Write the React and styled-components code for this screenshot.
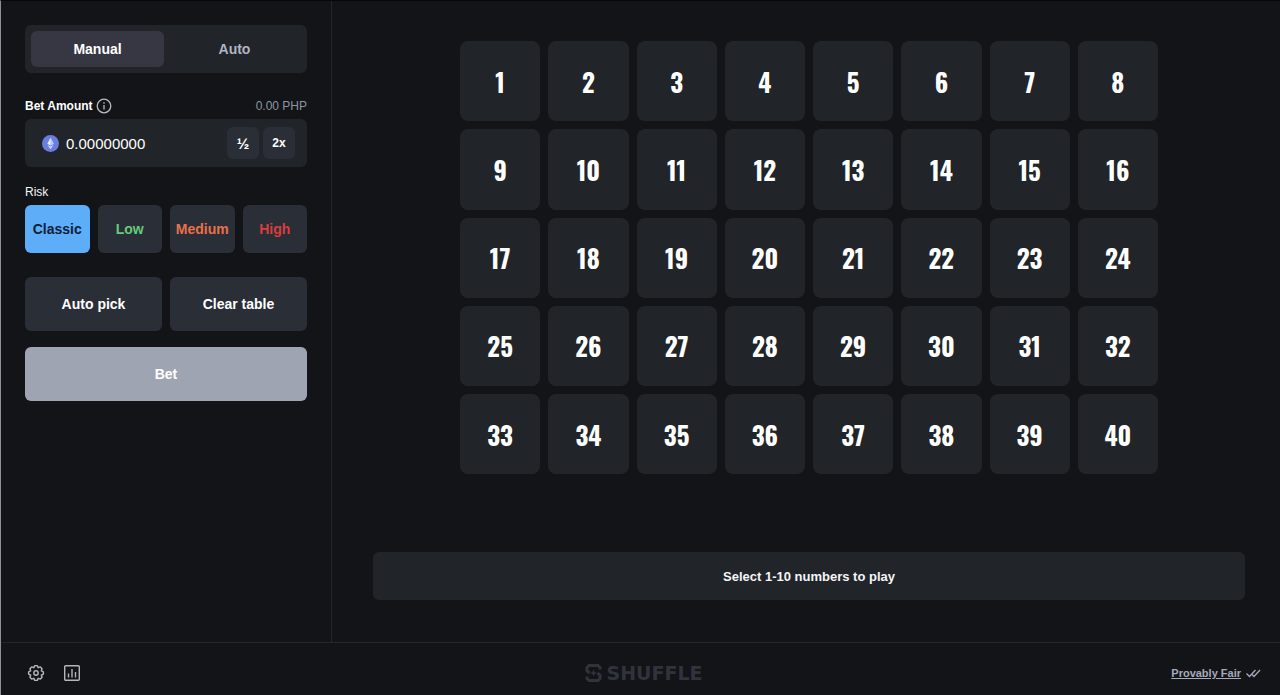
import { useState } from "react";
import styled, { createGlobalStyle } from "styled-components";

const GlobalStyle = createGlobalStyle`
  * {
    box-sizing: border-box;
  }

  body {
    margin: 0;
    background: #121418;
    color: #f5f6f8;
    font-family: "Liberation Sans", Arial, sans-serif;
    font-size: 14px;
  }

  button,
  input {
    font-family: inherit;
  }
`;

const Page = styled.div`
  display: flex;
  flex-direction: column;
  min-height: 100vh;
  border-top: 1px solid #060709;
  border-left: 1px solid #8e9092;
`;

const Game = styled.main`
  display: flex;
  flex: 1;
`;

const Sidebar = styled.form`
  flex: 0 0 331px;
  min-width: 0;
  padding: 24px;
  border-right: 1px solid #24262b;
`;

const Tabs = styled.div`
  display: flex;
  gap: 4px;
  height: 48px;
  padding: 6px;
  margin-bottom: 24px;
  border-radius: 6px;
  background: #212428;
`;

const Tab = styled.button`
  flex: 1;
  border: 0;
  border-radius: 6px;
  background: ${(props) => (props.$active ? "#363743" : "transparent")};
  color: ${(props) => (props.$active ? "#ffffff" : "#b0b5c4")};
  font-size: 14px;
  font-weight: 600;
  cursor: pointer;
`;

const LabelRow = styled.div`
  display: flex;
  align-items: center;
  justify-content: space-between;
  height: 18px;
  margin-bottom: 4px;
  font-size: 12px;
  color: #8f94a3;
`;

const Label = styled.label`
  display: flex;
  align-items: center;
  gap: 2px;
  color: #ffffff;
  font-weight: 600;
`;

const AmountField = styled.div`
  display: flex;
  align-items: center;
  gap: 4px;
  height: 48px;
  padding: 0 12px 0 17px;
  border-radius: 6px;
  background: #212428;
`;

const AmountInput = styled.input`
  flex: 1;
  width: 100%;
  min-width: 0;
  padding: 0 0 0 3px;
  border: 0;
  outline: 0;
  background: transparent;
  color: #ffffff;
  font-size: 15px;
`;

const SmallButton = styled.button`
  display: flex;
  flex: none;
  align-items: center;
  justify-content: center;
  width: 32px;
  height: 32px;
  padding: 0;
  border: 0;
  border-radius: 6px;
  background: #2a2e36;
  color: #ffffff;
  font-size: ${(props) => (props.$large ? "15px" : "12px")};
  font-weight: 600;
  cursor: pointer;
`;

const RiskGroup = styled.fieldset`
  min-width: 0;
  margin: 18px 0 24px;
  padding: 0;
  border: 0;
`;

const Legend = styled.legend`
  padding: 0;
  margin-bottom: 6px;
  font-size: 12px;
  line-height: 14px;
`;

const Row = styled.div`
  display: flex;
  gap: 8px;
`;

const Button = styled.button`
  flex: 1 1 0;
  min-width: 0;
  height: ${(props) => (props.$tall ? "54px" : "48px")};
  padding: 0;
  border: 0;
  border-radius: 6px;
  background: ${(props) => props.$background || "#2a2e36"};
  color: ${(props) => props.$color || "#ffffff"};
  font-size: 14px;
  font-weight: 600;
  cursor: pointer;
`;

const BetRow = styled(Row)`
  margin-top: 16px;
`;

const Board = styled.section`
  display: flex;
  flex: 1;
  flex-direction: column;
  justify-content: space-between;
  align-items: center;
  gap: 24px;
  padding: 40px 35px 42px 41px;
`;

const Grid = styled.div`
  display: grid;
  grid-template-columns: repeat(8, 1fr);
  gap: 8px;
  width: 100%;
  max-width: 698px;
`;

const Tile = styled.button`
  aspect-ratio: 1;
  padding: 0;
  border: 0;
  border-radius: 8px;
  background: ${(props) => (props.$picked ? "#5eadf9" : "#212428")};
  color: #ffffff;
  font-family: Oswald, "Liberation Sans Narrow", "Liberation Sans", sans-serif;
  font-size: 25px;
  font-weight: 700;
  cursor: pointer;
`;

const Hint = styled.div`
  display: flex;
  align-items: center;
  justify-content: center;
  width: 100%;
  height: 48px;
  border-radius: 6px;
  background: #212428;
  font-size: 13px;
  font-weight: 600;
`;

const Footer = styled.footer`
  display: grid;
  grid-template-columns: 1fr auto 1fr;
  align-items: center;
  padding: 20px 19px 12px 26px;
  border-top: 1px solid #24262b;
`;

const Tools = styled.div`
  display: flex;
  gap: 18px;
`;

const IconButton = styled.button`
  display: flex;
  padding: 0;
  border: 0;
  background: transparent;
  color: #b4b6bb;
  cursor: pointer;
`;

const Brand = styled.div`
  display: flex;
  align-items: center;
  gap: 4px;
  color: #30333b;
  font-family: "DejaVu Sans", sans-serif;
  font-size: 19px;
  line-height: 20px;
  font-weight: 700;
`;

const Fair = styled.div`
  display: flex;
  align-items: center;
  justify-content: flex-end;
  gap: 4px;
  color: #a5aabb;
`;

const FairLink = styled.a`
  color: inherit;
  font-size: 11px;
  font-weight: 600;
`;

const InfoIcon = () => (
  <svg width="18" height="18" viewBox="0 0 18 18" fill="none">
    <circle cx="9" cy="9" r="6.8" stroke="#b9bbc0" strokeWidth="1.3" />
    <path d="M9 8v4.5M9 5.3v1.5" stroke="#b9bbc0" strokeWidth="1.3" />
  </svg>
);

const EthIcon = () => (
  <svg width="17" height="17" viewBox="0 0 16 16">
    <circle cx="8" cy="8" r="8" fill="#6a7de0" />
    <path d="M8 2.6 5 8.2l3 1.7 3-1.7z" fill="#e6eafc" />
    <path d="M8 10.8 5 9.1l3 4.3 3-4.3z" fill="#d3daf8" />
    <path d="M8 2.6v7.3l3-1.7z" fill="#bac5f3" />
  </svg>
);

const GearIcon = () => (
  <svg
    width="18"
    height="18"
    viewBox="0 0 24 24"
    fill="none"
    stroke="currentColor"
    strokeWidth="1.9"
    strokeLinejoin="round"
  >
    <path d="M9.1 4.9L10.4 2.2h3.2L14.9 4.9L17.8 3.9L20.1 6.2L19.1 9.1L21.8 10.4v3.2L19.1 14.9L20.1 17.8L17.8 20.1L14.9 19.1L13.6 21.8h-3.2L9.1 19.1L6.2 20.1L3.9 17.8L4.9 14.9L2.2 13.6v-3.2L4.9 9.1L3.9 6.2L6.2 3.9z" />
    <circle cx="12" cy="12" r="2.9" />
  </svg>
);

const StatsIcon = () => (
  <svg
    width="18"
    height="18"
    viewBox="0 0 18 18"
    fill="none"
    stroke="currentColor"
    strokeWidth="1.4"
  >
    <rect x="1.7" y="1.7" width="14.6" height="14.6" rx="1" />
    <path d="M5.5 9.5v4M9 5v8.5M12.5 8v5.5" />
  </svg>
);

const BrandMark = () => (
  <svg
    width="17"
    height="20"
    viewBox="0 0 17 20"
    fill="none"
    stroke="currentColor"
    strokeWidth="3"
  >
    <path d="M15 6.5V4.5L13 2.5H4L2 4.5v3.3L4.5 10" />
    <path d="M2 13.5v2L4 17.5h9l2-2v-3.3L12.5 10" />
    <path
      d="M8.5 6.5 9.6 8.9 12 10l-2.4 1.1-1.1 2.4-1.1-2.4L5 10l2.4-1.1z"
      fill="currentColor"
      stroke="none"
    />
  </svg>
);

const ChecksIcon = () => (
  <svg
    width="16"
    height="10"
    viewBox="0 0 16 10"
    fill="none"
    stroke="currentColor"
    strokeWidth="1.3"
  >
    <path d="M1.5 5.5 4.5 8.5 10.5 2M6.5 6l2.5 2.5L15 2" />
  </svg>
);

const risks = [
  { name: "Classic", color: "#0b2036", background: "#5eadf9" },
  { name: "Low", color: "#62cc7b" },
  { name: "Medium", color: "#e9714c" },
  { name: "High", color: "#d93e3e" },
];

const numbers = Array.from({ length: 40 }, (_, i) => i + 1);

const App = () => {
  const [mode, setMode] = useState("Manual");
  const [amount, setAmount] = useState("0.00000000");
  const [picked, setPicked] = useState([]);

  const toggle = (n) => {
    if (picked.includes(n)) {
      setPicked(picked.filter((p) => p !== n));
    } else if (picked.length < 10) {
      setPicked([...picked, n]);
    }
  };

  const autoPick = () => {
    const shuffled = [...numbers].sort(() => Math.random() - 0.5);
    setPicked(shuffled.slice(0, 10));
  };

  const scale = (factor) => setAmount((Number(amount) * factor).toFixed(8));

  return (
    <Page>
      <GlobalStyle />
      <Game>
        <Sidebar onSubmit={(event) => event.preventDefault()}>
          <Tabs>
            {["Manual", "Auto"].map((name) => (
              <Tab
                key={name}
                type="button"
                $active={mode === name}
                onClick={() => setMode(name)}
              >
                {name}
              </Tab>
            ))}
          </Tabs>

          <LabelRow>
            <Label htmlFor="amount">
              Bet Amount
              <InfoIcon />
            </Label>
            <span>0.00 PHP</span>
          </LabelRow>
          <AmountField>
            <EthIcon />
            <AmountInput
              id="amount"
              value={amount}
              onChange={(event) => setAmount(event.target.value)}
            />
            <SmallButton type="button" $large onClick={() => scale(0.5)}>
              ½
            </SmallButton>
            <SmallButton type="button" onClick={() => scale(2)}>
              2x
            </SmallButton>
          </AmountField>

          <RiskGroup>
            <Legend>Risk</Legend>
            <Row>
              {risks.map((risk) => (
                <Button
                  key={risk.name}
                  type="button"
                  $color={risk.color}
                  $background={risk.background}
                >
                  {risk.name}
                </Button>
              ))}
            </Row>
          </RiskGroup>

          <Row>
            <Button type="button" $tall onClick={autoPick}>
              Auto pick
            </Button>
            <Button type="button" $tall onClick={() => setPicked([])}>
              Clear table
            </Button>
          </Row>
          <BetRow>
            <Button type="submit" $tall $background="#9fa4b3">
              Bet
            </Button>
          </BetRow>
        </Sidebar>

        <Board>
          <Grid>
            {numbers.map((n) => (
              <Tile
                key={n}
                type="button"
                $picked={picked.includes(n)}
                onClick={() => toggle(n)}
              >
                {n}
              </Tile>
            ))}
          </Grid>
          <Hint>Select 1-10 numbers to play</Hint>
        </Board>
      </Game>

      <Footer>
        <Tools>
          <IconButton aria-label="Settings">
            <GearIcon />
          </IconButton>
          <IconButton aria-label="Statistics">
            <StatsIcon />
          </IconButton>
        </Tools>
        <Brand>
          <BrandMark />
          SHUFFLE
        </Brand>
        <Fair>
          <FairLink href="#fairness">Provably Fair</FairLink>
          <ChecksIcon />
        </Fair>
      </Footer>
    </Page>
  );
};

export default App;
